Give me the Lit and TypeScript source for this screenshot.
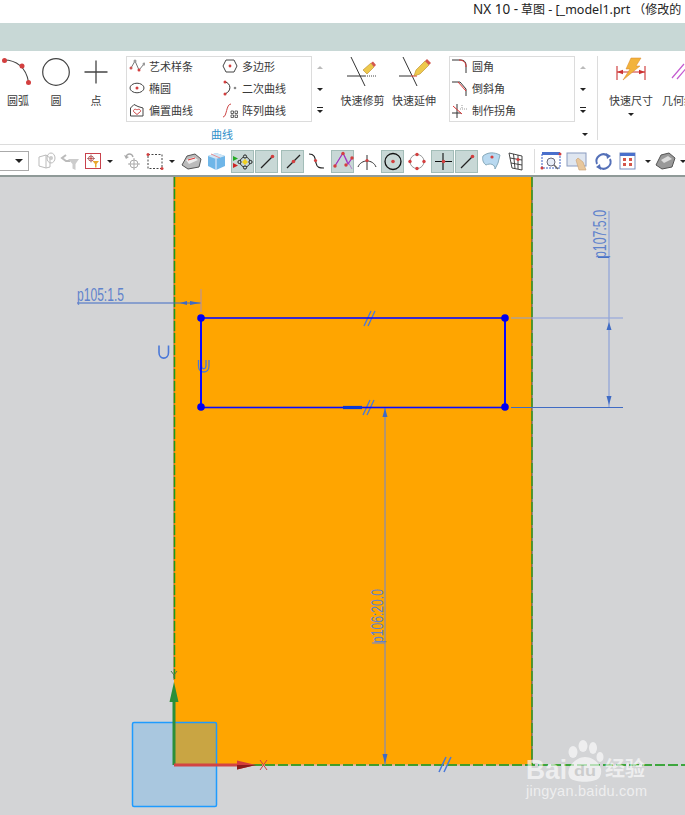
import { LitElement, html, svg, css } from "lit";
import { customElement } from "lit/decorators.js";

const R = "#d33f3f";
const dot = (x: number, y: number, r = 1.8, c = R) => svg`<circle cx=${x} cy=${y} r=${r} fill=${c}/>`;

const cmdIcons: Record<string, any> = {
  arc: svg`<path d="M4 4C16 4 26 11 28.500 26" fill="none" stroke="#444" stroke-width="1.100"/>${dot(4.500, 4.500, 2.500)}${dot(22, 10, 2.500)}${dot(28.500, 26.500, 2.500)}`,
  circle: svg`<circle cx="20" cy="16" r="13.300" fill="none" stroke="#444" stroke-width="1.200"/>`,
  point: svg`<path d="M20 4.500V27.500M8.500 16H31.500" stroke="#444" stroke-width="1.300" fill="none"/>`,
  trim: svg`<path d="M11 1L25 30M7 20H25" stroke="#333" stroke-width="1"/><path d="M25 20H36" stroke="#444" stroke-dasharray="1 1"/><path d="M23 14L31 7L34 11L27 18Z" fill="#eec94c" stroke="#b98a2a" stroke-width=".6"/><path d="M31 7L33 5.500L36 9L34 11Z" fill="#d4574d"/>`,
  extend: svg`<path d="M12 1L26 30" stroke="#333" stroke-width="1"/><path d="M8 20H20" stroke="#333"/><path d="M20 20H26" stroke="#d33" stroke-width="1"/><path d="M23 20L25 14L34 5L38 9L29 18Z" fill="#eec94c" stroke="#b98a2a" stroke-width=".6"/><path d="M34 5L36 3L40 7L38 9Z" fill="#d4574d"/>`,
  dim: svg`<path d="M4 10V24M32 10V24M4 16H32" stroke="#c33" stroke-width="1.100" fill="none"/><path d="M4 16L10 13.800V18.200ZM32 16L26 13.800V18.200Z" fill="#c33"/><path d="M18 2H28L23 10H27L10 24L17 13H13Z" fill="#f2b33c" stroke="#d9862a" stroke-width=".5"/>`,
  geo: svg`<path d="M6 22L18 8M11 23L23 9" stroke="#c45bd0" stroke-width="1.200"/>`,
};

const galIcons: Record<string, any> = {
  spline: svg`<path d="M2 10L6 3L10 12L15 6" fill="none" stroke="#777" stroke-width="1"/>${dot(2, 10, 1.500, "#c55")}${dot(6, 3, 1.500, "#999")}${dot(10, 12, 1.500, R)}${dot(15, 6, 1.500, "#999")}`,
  ellipse: svg`<ellipse cx="8" cy="8" rx="7" ry="4.800" fill="none" stroke="#444"/>${dot(8, 8, 1.500)}`,
  offset: svg`<path d="M1.500 14V6L5 2.500L9 4.500L14 6V14Z" fill="none" stroke="#444"/><path d="M8 12.500L4.500 9.500C4 7.500 6.500 6.500 8 8C9.500 6.500 12 7.500 11.500 9.500Z" fill="none" stroke="#c44"/>`,
  poly: svg`<path d="M4 2H12L15 8L12 14H4L1 8Z" fill="none" stroke="#444"/>${dot(8, 8, 1.400)}`,
  conic: svg`<path d="M3 2C9 3 10 11 3 14" fill="none" stroke="#333"/>${dot(3, 2, 1.500)}${dot(3, 14, 1.500)}${dot(13, 8, 1.300, "#888")}`,
  pattern: svg`<path d="M1 15C5 15 4 2 9 2" fill="none" stroke="#c44"/><path d="M9 9h2.500v2.500H9zM13 9h2.500v2.500H13zM9 13h2.500v2.500H9zM13 13h2.500v2.500H13z" fill="none" stroke="#444" stroke-width=".8"/>`,
  fillet: svg`<path d="M0 2H9C12 2 14 4 14 7V15" fill="none" stroke="#333"/><path d="M7 2C11 2 14 4 14 9" fill="none" stroke="#d33"/>`,
  chamfer: svg`<path d="M0 2H8L14 9V16" fill="none" stroke="#333"/><path d="M6 2L14 11" fill="none" stroke="#d33"/>`,
  corner: svg`<path d="M5 2V16M0 11H9" stroke="#333" fill="none"/><path d="M1 4L10 12" stroke="#d33"/><path d="M8 7H15M10 3V7" stroke="#999" stroke-dasharray="1 1"/>`,
};

const tool: Record<string, any> = {
  feat: svg`<path d="M4 7L11 5V18L4 16ZM11 5L15 8V17L11 18" fill="none" stroke="#bbb"/><ellipse cx="16" cy="8" rx="4" ry="5" fill="none" stroke="#bbb"/><circle cx="16" cy="8" r="2" fill="#ccc"/>`,
  filterG: svg`<path d="M7 5L3 8L7 11H11" fill="none" stroke="#bbb" stroke-width="2"/><path d="M9 9H20L16.500 14V20L13.500 18.500V14Z" fill="#ccc"/>`,
  filterR: svg`<rect x="3.500" y="3.500" width="15" height="15" fill="#fff" stroke="#c8414c" stroke-width="1"/><circle cx="9" cy="8.500" r="2.500" fill="none" stroke="#b55"/><path d="M9 4.500V12.500M5 8.500H13" stroke="#966" stroke-width=".8"/>${dot(9, 8.500, 1)}<path d="M10.500 11H17L14.500 14V17.500H13V14Z" fill="#e8a72c"/>`,
  undo: svg`<path d="M5 7C6 3 11 3 12 7" fill="none" stroke="#aaa" stroke-width="1.400"/><path d="M3 5L5 9L8 7Z" fill="#aaa"/><circle cx="13" cy="14" r="4" fill="none" stroke="#aaa"/><path d="M13 8V20M7 14H19" stroke="#aaa"/>`,
  rect: svg`<rect x="4" y="4.500" width="14" height="14" fill="none" stroke="#444" stroke-dasharray="2 1.500"/>${dot(4, 4.500, 1.500)}${dot(18, 18.500, 1.500)}`,
  sheet: svg`<path d="M1 15L6 6L14 4L20 9L18 17L7 19Z" fill="#bbb" stroke="#555"/><path d="M5 10L13 7L17 10L8 14Z" fill="#eee"/><path d="M7 10L14 8" stroke="#d33"/>`,
  cube: svg`<path d="M3 6L11 3L20 6V16L11 20L3 16Z" fill="#6fb6e8"/><path d="M3 6L11 9L20 6L11 3Z" fill="#cfe6f6"/><path d="M11 9V20" stroke="#eef"/><path d="M6 4L15 8" stroke="#e77" stroke-width=".8"/>`,
  constraints: svg`<path d="M1 6L6 8.500L1 11Z" fill="#22aa22"/><path d="M1 13L6 15.500L1 18Z" fill="#cc2222"/><circle cx="13" cy="12" r="5" fill="none" stroke="#333"/><circle cx="13" cy="6.500" r="1.600" fill="#c8d8d6" stroke="#222"/><circle cx="13" cy="17.500" r="1.600" fill="#c8d8d6" stroke="#222"/><circle cx="7.500" cy="12" r="1.600" fill="#c8d8d6" stroke="#222"/><circle cx="18.500" cy="12" r="1.600" fill="#c8d8d6" stroke="#222"/><path d="M13 9L16 12L13 15L10 12Z" fill="#f0d020"/>`,
  end: svg`<path d="M5 18L17 6" stroke="#222" stroke-width="1.200"/>${dot(16.500, 6.500, 1.800)}`,
  mid: svg`<path d="M5 18L18 5" stroke="#222" stroke-width="1.200"/>${dot(11.500, 11.500, 1.800)}`,
  curve: svg`<path d="M4 4C11 4 10 10 11 13C12 18 15 18 19 18" fill="none" stroke="#222" stroke-width="1.200"/>${dot(10.500, 10.500, 1.600)}`,
  inflect: svg`<path d="M3 16L11 3L16 14L20 8" fill="none" stroke="#a030c0" stroke-width="1.100"/><path d="M2 17L11 3L20 19" fill="none" stroke="#a030c0" stroke-width=".5"/>${dot(3, 16, 1.700)}${dot(11, 3.500, 1.700)}${dot(14, 15, 1.700)}${dot(20, 8, 1.700)}`,
  arcTan: svg`<path d="M2 17C5 9 17 9 20 17M11 5V20" fill="none" stroke="#333" stroke-width="1"/>${dot(11, 10.500, 1.600)}`,
  center: svg`<circle cx="11" cy="11.500" r="8" fill="none" stroke="#111" stroke-width="1.300"/>${dot(11, 11.500, 1.800)}`,
  quad: svg`<circle cx="11" cy="11.500" r="7" fill="none" stroke="#999" stroke-width="1"/>${dot(11, 4.500, 1.700)}${dot(11, 18.500, 1.700)}${dot(4, 11.500, 1.700)}${dot(18, 11.500, 1.700)}`,
  cross: svg`<path d="M11 3V20M3 11.500H20" stroke="#111" stroke-width="1.100"/>${dot(11.500, 11.500, 1.800)}`,
  surf: svg`<path d="M3 6C8 2 14 2 20 5L18 13L15 19C15 14 10 13 6 15C3 13 2 9 3 6Z" fill="#b9d9f0" stroke="#8ab"/>${dot(12, 7, 1.600)}`,
  grid: svg`<path d="M4 3L17 6V20L7 18ZM8.500 4L10 18.500M13 5V19M5 8L17 10M6 13L17 15" fill="none" stroke="#333" stroke-width=".9"/>${dot(13, 9.500, 1.600)}`,
  fit: svg`<rect x="2" y="3" width="18" height="15" fill="#fff" stroke="#3a5fc0" stroke-dasharray="2 1"/><rect x="2" y="2" width="18" height="3" fill="#4a70cc"/><circle cx="11" cy="12" r="4" fill="#e8eef8" stroke="#667"/><path d="M14 15L18 19" stroke="#666" stroke-width="1.500"/>${dot(2, 18, 1.500)}${dot(20, 4, 1.500)}`,
  pan: svg`<rect x="2" y="3" width="19" height="13" fill="#dfe6f0" stroke="#8a9bc0"/><path d="M11 10L13 8L18 12L21 20H14Z" fill="#e8c79c" stroke="#c9a070" stroke-width=".6"/>`,
  rotate: svg`<path d="M5 14A7 7 0 0 1 16 6" fill="none" stroke="#5470b8" stroke-width="2"/><path d="M18 9A7 7 0 0 1 7 17" fill="none" stroke="#5470b8" stroke-width="2"/><path d="M14 3L19 6L15 9ZM9 20L4 17L8 14Z" fill="#5470b8"/>`,
  views: svg`<rect x="3" y="3" width="15" height="16" fill="#fff" stroke="#7a8fc0"/><rect x="3" y="3" width="15" height="3" fill="#4a70cc"/><path d="M6 8h3v3H6zM12 8h3v3h-3zM6 13h3v3H6zM12 13h3v3h-3z" fill="#d4564a"/>`,
  shade: svg`<path d="M1 15L6 5L14 3L20 8L17 17L7 19Z" fill="#999" stroke="#555"/><path d="M6 10L13 6L17 9L9 13Z" fill="#ddd"/>`,
};

const cmd = (icon: string, label: string, w: number, sw = 40, more = false) => html`
  <div class="cmd" style="width:${w}px">
    <svg class="ci" width=${sw} height="34" viewBox="0 0 ${sw} 34">${cmdIcons[icon]}</svg>
    <span>${label}</span>${more ? html`<i class="tri small"></i>` : ""}
  </div>`;

const gal = (icon: string, label: string) => html`
  <div class="gi"><svg width="16" height="16" viewBox="0 0 16 16">${galIcons[icon]}</svg><span>${label}</span></div>`;

const scroller = html`<div class="scr"><i class="up"></i><i class="tri"></i><i class="tri bar"></i></div>`;

const tb = (icon: string, active = false) => html`
  <div class=${active ? "tb on" : "tb"}><svg width="22" height="22" viewBox="0 0 22 22">${tool[icon]}</svg></div>`;
const drop = html`<div class="drop"><i class="tri"></i></div>`;
const sp = (w: number) => html`<div style="width:${w}px;flex:none"></div>`;

const BLUE = "#3f6bc4";

@customElement("app-root")
export class AppRoot extends LitElement {
  static styles = css`
    :host { display: flex; flex-direction: column; width: 685px; height: 815px; overflow: hidden; background: #fff;
      font-family: "Noto Sans", "Noto Sans CJK SC", sans-serif; color: #3a3a3a; font-size: 11px; }
    .title { height: 23px; flex: none; box-sizing: border-box; padding-left: 473px; line-height: 19px; white-space: nowrap; overflow: hidden; color: #222; font-size: 12px; }
    .title b { font-weight: 400; font-size: 13.500px; }
    .title b.m { font-size: 12.500px; }
    .band { height: 28px; flex: none; background: #c8d8d6; }
    .ribbon { height: 94px; flex: none; box-sizing: border-box; border-bottom: 1px solid #dcdcdc; display: flex; overflow: hidden; }
    .group { width: 597px; flex: none; display: flex; flex-direction: column; }
    .cmds { display: flex; padding-top: 5px; height: 66px; align-items: flex-start; flex: none; }
    .cmd { display: flex; flex-direction: column; align-items: center; flex: none; }
    .cmd .ci { flex: none; display: block; }
    .cmd span { line-height: 18px; margin-top: 2px; white-space: nowrap; }
    .gallery { box-sizing: border-box; height: 66px; border: 1px solid #dcdcdc; display: grid; grid-auto-rows: 22px; flex: none; padding-left: 2px; }
    .g1 { width: 186px; margin-left: 10px; grid-template-columns: 93px 1fr; grid-auto-flow: column; grid-template-rows: repeat(3, 22px); }
    .g2 { width: 126px; margin-left: 12px; padding-left: 2px; }
    .gi { display: flex; align-items: center; gap: 4px; height: 18px; white-space: nowrap; }
    .gi svg { flex: none; }
    .scr { width: 14px; height: 66px; margin-left: 1px; display: flex; flex-direction: column; align-items: center; justify-content: space-around; flex: none; }
    .scr i { display: block; }
    .tri { display: block; width: 0; height: 0; border-left: 3px solid transparent; border-right: 3px solid transparent; border-top: 3.500px solid #222; }
    .tri.small { margin-top: 3px; border-left-width: 3px; border-right-width: 3px; border-top-width: 3px; }
    .tri.bar { position: relative; }
    .tri.bar::before { content: ""; position: absolute; left: -3px; top: -6px; width: 6px; height: 1px; background: #222; }
    .up { width: 0; height: 0; border-left: 3px solid transparent; border-right: 3px solid transparent; border-bottom: 3.500px solid #bbb; }
    .groupfoot { display: flex; align-items: center; height: 20px; margin-top: 2px; }
    .glabel { width: 444px; text-align: center; color: #2f8fc9; flex: none; }
    .more { margin-left: 138px; flex: none; }
    .sep { width: 1px; background: #dcdcdc; height: 84px; margin-top: 5px; flex: none; }
    .after { display: flex; padding-top: 5px; margin-left: 11px; gap: 9px; }
    .toolbar { height: 32px; flex: none; box-sizing: border-box; display: flex; align-items: center; overflow: hidden; border-bottom: 2px solid #8f9a98; padding-top: 2px; }
    .drop { width: 30px; height: 20px; flex: none; box-sizing: border-box; margin-left: -1px; border: 1px solid #aaa; display: flex; align-items: center; justify-content: flex-end; padding-right: 5px; }
    .drop .tri { border-left-width: 4px; border-right-width: 4px; border-top-width: 4px; }
    .tb { width: 23px; height: 23px; flex: none; box-sizing: border-box; display: flex; align-items: center; justify-content: center; border: 1px solid transparent; }
    .tb.on { background: #c8d8d6; border-color: #a3bdb8; }
    .tb svg { flex: none; }
    .arr { width: 12px; flex: none; display: flex; justify-content: center; }
    .vsep { width: 1px; height: 24px; background: #ddd; flex: none; }
    .canvas { flex: 1; min-height: 0; background: #d3d4d6; }
    .canvas svg { display: block; }
    .dim { font-family: "Liberation Sans", sans-serif; fill: #5f82cc; }
    .wm { font-family: "Liberation Sans", sans-serif; fill: #fff; }
    .wmc { font-family: "Noto Sans CJK SC", sans-serif; fill: #fff; }
  `;

  render() {
    const arrow = html`<div class="arr"><i class="tri"></i></div>`;
    return html`
      <div class="title"><b>NX 10 -</b> 草图 <b class="m">- [_model1.prt</b> （修改的</div>
      <div class="band"></div>
      <div class="ribbon">
        <div class="group">
          <div class="cmds">
            ${cmd("arc", "圆弧", 36, 36)}
            ${cmd("circle", "圆", 40)}
            ${cmd("point", "点", 40)}
            <div class="gallery g1">
              ${gal("spline", "艺术样条")}${gal("ellipse", "椭圆")}${gal("offset", "偏置曲线")}
              ${gal("poly", "多边形")}${gal("conic", "二次曲线")}${gal("pattern", "阵列曲线")}
            </div>
            ${scroller}
            ${sp(13)}
            ${cmd("trim", "快速修剪", 45, 45)}
            ${sp(6)}
            ${cmd("extend", "快速延伸", 46, 46)}
            <div class="gallery g2">
              ${gal("fillet", "圆角")}${gal("chamfer", "倒斜角")}${gal("corner", "制作拐角")}
            </div>
            ${scroller}
          </div>
          <div class="groupfoot">
            <div class="glabel">曲线</div>
            <i class="tri more"></i>
          </div>
        </div>
        <div class="sep"></div>
        <div class="after">
          ${cmd("dim", "快速尺寸", 44, 36, true)}
          ${cmd("geo", "几何约束", 44, 36)}
        </div>
      </div>
      <div class="toolbar">
        ${drop}${sp(5)}
        ${tb("feat")}${sp(1)}${tb("filterG")}${tb("filterR")}${arrow}${sp(4)}
        ${tb("undo")}${tb("rect")}${arrow}${sp(2)}
        ${tb("sheet")}${sp(1)}${tb("cube")}${sp(4)}
        ${tb("constraints", true)}${sp(1)}${tb("end", true)}${sp(3)}${tb("mid", true)}
        ${tb("curve")}${sp(4)}${tb("inflect", true)}
        ${sp(1)}${tb("arcTan")}${sp(3)}${tb("center", true)}
        ${sp(1)}${tb("quad")}${sp(3)}${tb("cross", true)}${sp(1)}${tb("end", true)}
        ${sp(1)}${tb("surf")}${sp(2)}${tb("grid")}${sp(7)}
        <div class="vsep"></div>${sp(4)}
        ${tb("fit")}${sp(2)}${tb("pan")}${sp(4)}${tb("rotate")}${sp(2)}${tb("views")}${sp(3)}${arrow}${tb("shade")}${arrow}
      </div>
      <div class="canvas">
        <svg width="685" height="638" viewBox="0 177 685 638">
          <rect x="174" y="177" width="358" height="588" fill="#ffa500"/>
          <!-- sketch border -->
          <path d="M174 177V680" stroke="#b5603a" stroke-width="1"/>
          <path d="M174.500 177V680" stroke="#1c9a1c" stroke-width="1.500" stroke-dasharray="10 2"/>
          <path d="M532 177V765" stroke="#444" stroke-width="1"/>
          <path d="M532 177V765" stroke="#3b9a22" stroke-width="1.500" stroke-dasharray="10 3"/>
          <path d="M174 765H532" stroke="#e8b090" stroke-width="1.500"/>
          <path d="M174 765H685" stroke="#0d960d" stroke-width="1.500" stroke-dasharray="10 3"/>

          <!-- dimensions -->
          <path d="M77 303H201" stroke=${BLUE} stroke-width="1"/>
          <path d="M201 289V312" stroke="#b08fb0" stroke-width="1"/>
          <path d="M180 303L187 301V305ZM200 303L190 301V305Z" fill=${BLUE}/>
          <text class="dim" x="77" y="301" font-size="18" textLength="47" lengthAdjust="spacingAndGlyphs">p105:1.5</text>

          <path d="M511 318H623" stroke="#8b9fdc" stroke-width="1"/>
          <path d="M511 407.500H623" stroke=${BLUE} stroke-width="1"/>
          <path d="M609 211V407" stroke="#92a6d8" stroke-width="1.300"/>
          <path d="M598 257.500H609" stroke=${BLUE} stroke-width="1"/>
          <path d="M609 322L606.500 330H611.500ZM609 405L606.500 396H611.500Z" fill=${BLUE}/>
          <text class="dim" x="0" y="0" font-size="18" textLength="48" lengthAdjust="spacingAndGlyphs" transform="translate(606 258) rotate(-90)">p107:5.0</text>

          <path d="M385 408V765" stroke="#6b86d8" stroke-width="1"/>
          <path d="M385 408L382.500 417H387.500ZM385 764L382.500 754H387.500Z" fill=${BLUE}/>
          <path d="M372 643H385" stroke="#6b86d8" stroke-width="1"/>
          <text class="dim" x="0" y="0" font-size="17" textLength="54" lengthAdjust="spacingAndGlyphs" transform="translate(383 643) rotate(-90)">p106:20.0</text>

          <!-- constraints -->
          <g fill="none" stroke="#4a78d8" stroke-width="1.600">
            <path d="M159 345.500V352.500C159 360 168.500 360 168.500 352.500V345.500"/>
            <path d="M198.500 360V366C198.500 374 209 374 209 366V360" stroke-width="1.300"/>
            <path d="M201.500 360V365C201.500 370 206 370 206 365V360" stroke-width="1.300"/>
            <path d="M364 326L371 311M368 326L375 311" stroke-width="1.300"/>
            <path d="M363 415L370 400M367 415L374 400" stroke-width="1.300"/>
            <path d="M439 772L446 757M444 772L451 757" stroke-width="1.500"/>
          </g>

          <!-- sketch rectangle -->
          <rect x="201" y="318" width="304" height="89.500" fill="none" stroke="#0a0aff" stroke-width="1.600"/>
          <path d="M201 318V407.500M505 318V407.500" stroke="#0a0aff" stroke-width="2"/>
          <path d="M343 407.500H362" stroke="#0a3ad8" stroke-width="3.200"/>
          <g fill="#0000f0">
            <circle cx="201" cy="318" r="3.800"/><circle cx="505" cy="318" r="3.800"/>
            <circle cx="201" cy="407" r="3.800"/><circle cx="505" cy="407" r="3.800"/>
          </g>

          <!-- csys -->
          <rect x="132.500" y="722.500" width="84" height="84" rx="1.500" fill="#39a8f7" fill-opacity=".27" stroke="#1e9bff" stroke-width="1.500"/>
          <path d="M174 765V700" stroke="#2b8f3a" stroke-width="3"/>
          <path d="M174 682L178.500 702H169.500Z" fill="#2b8f3a"/>
          <path d="M174 765H240" stroke="#d24444" stroke-width="3"/>
          <path d="M256 765L237 760.500V769.500Z" fill="#d23c3c"/>
          <path d="M237 765L256 765L237 769.500Z" fill="#8a1c1c"/>
          <path d="M260 760L267 770M267 760L260 770" stroke="#cc4040" stroke-width="1"/>
          <path d="M171 671L174 675L177 671M174 675V678" stroke="#4a7a4a" stroke-width="1" fill="none"/>

          <!-- watermark -->
          <g opacity=".62">
            <text class="wm" x="526" y="779" font-size="27" font-weight="700" textLength="41" lengthAdjust="spacingAndGlyphs">Bai</text>
            <g fill="#fff">
              <ellipse cx="573" cy="752" rx="4.500" ry="6" />
              <ellipse cx="583" cy="746" rx="4.500" ry="6" />
              <ellipse cx="593" cy="748" rx="4" ry="6" />
              <ellipse cx="600" cy="757" rx="3.500" ry="5" />
              <path d="M570 778C564 768 576 757 585 757C595 757 606 768 599 778C594 783 575 783 570 778Z"/>
            </g>
            <text x="574" y="776" font-family="Liberation Sans, sans-serif" font-size="15" font-weight="700" fill="#c9c9c9" textLength="22" lengthAdjust="spacingAndGlyphs">du</text>
            <text class="wmc" x="605" y="776" font-size="20" font-weight="700">经验</text>
            <text class="wm" x="526" y="796" font-size="14.500" textLength="121" lengthAdjust="spacing">jingyan.baidu.com</text>
          </g>
        </svg>
      </div>
    `;
  }
}
